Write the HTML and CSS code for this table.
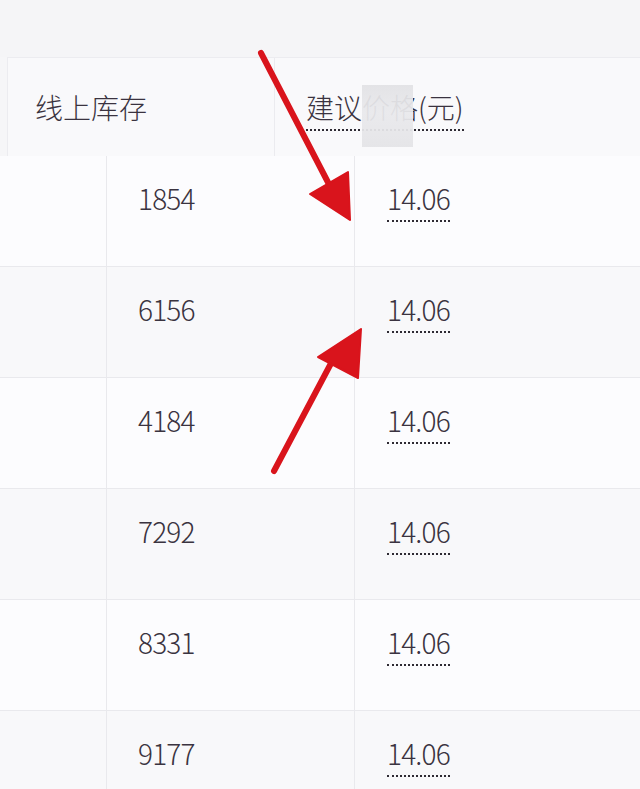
FILE: index.html
```html
<!DOCTYPE html>
<html lang="zh-CN">
<head>
  <meta charset="UTF-8">
  <meta name="viewport" content="width=device-width, initial-scale=1.0">
  <title>库存与建议价格</title>
  <link rel="stylesheet" href="styles.css">
</head>
<body>
  <div class="topbar"></div>

  <div class="thead">
    <div class="th th-stock">线上库存</div>
    <div class="th th-price"><span class="tip">建议价格(元)</span></div>
  </div>

  <div class="tbody">
    <div class="tr">
      <div class="td"></div>
      <div class="td num">1854</div>
      <div class="td"><span class="tip num">14.06</span></div>
    </div>
    <div class="tr">
      <div class="td"></div>
      <div class="td num">6156</div>
      <div class="td"><span class="tip num">14.06</span></div>
    </div>
    <div class="tr">
      <div class="td"></div>
      <div class="td num">4184</div>
      <div class="td"><span class="tip num">14.06</span></div>
    </div>
    <div class="tr">
      <div class="td"></div>
      <div class="td num">7292</div>
      <div class="td"><span class="tip num">14.06</span></div>
    </div>
    <div class="tr">
      <div class="td"></div>
      <div class="td num">8331</div>
      <div class="td"><span class="tip num">14.06</span></div>
    </div>
    <div class="tr">
      <div class="td"></div>
      <div class="td num">9177</div>
      <div class="td"><span class="tip num">14.06</span></div>
    </div>
  </div>

  <!-- blurred patch over the header -->
  <div class="smudge"></div>

  <!-- annotation arrows -->
  <svg class="arrows" width="640" height="789" viewBox="0 0 640 789">
    <line x1="261" y1="53" x2="333" y2="192" stroke="#d9141c" stroke-width="6" stroke-linecap="round"/>
    <polygon points="350,220 310,194 348,172" fill="#d9141c" stroke="#d9141c" stroke-width="2" stroke-linejoin="round"/>
    <line x1="274" y1="471" x2="337" y2="352" stroke="#d9141c" stroke-width="6" stroke-linecap="round"/>
    <polygon points="361,329 318,357 358,378" fill="#d9141c" stroke="#d9141c" stroke-width="2" stroke-linejoin="round"/>
  </svg>
</body>
</html>
```

FILE: styles.css
```css
body {
  margin: 0;
  background: #f6f6f8;
  font-family: "Noto Sans CJK SC", "Noto Sans", sans-serif;
  font-weight: 300;
  color: #3a3340;
  position: relative;
  overflow: hidden;
}
.topbar {
  height: 57px;
  background: #f5f5f7;
}
.thead {
  display: flex;
  height: 99px;
  margin-left: 7px;
  box-sizing: border-box;
  border-top: 1px solid #ececf0;
  border-left: 1px solid #ececf0;
  background: #f9f9fb;
}
.th {
  font-size: 28px;
  line-height: 30px;
  padding-top: 34px;
  box-sizing: border-box;
}
.th-stock {
  width: 267px;
  padding-left: 27px;
  border-right: 1px solid #ebebef;
}
.th-price {
  padding-left: 31px;
}
.tip {
  display: inline-block;
  padding-bottom: 7px;
  border-bottom: 2px dotted #2e2a33;
}
.tr {
  display: grid;
  grid-template-columns: 107px 248px 1fr;
  height: 111px;
  box-sizing: border-box;
  border-bottom: 1px solid #e9e9ed;
  background: #fcfcfe;
}
.tr:nth-child(even) {
  background: #f8f8fa;
}
.td {
  font-size: 28px;
  line-height: 30px;
  padding-top: 27px;
  padding-left: 31px;
  border-right: 1px solid #e9e9ed;
}
.td:last-child {
  border-right: none;
  padding-left: 32px;
}
.num {
  letter-spacing: -0.8px;
}
.smudge {
  position: absolute;
  left: 362px;
  top: 85px;
  width: 51px;
  height: 62px;
  background: linear-gradient(180deg, #e2e2e5 0%, #e9e9ec 45%, #e4e4e7 100%);
  opacity: 0.94;
}
.arrows {
  position: absolute;
  left: 0;
  top: 0;
  pointer-events: none;
}
```
